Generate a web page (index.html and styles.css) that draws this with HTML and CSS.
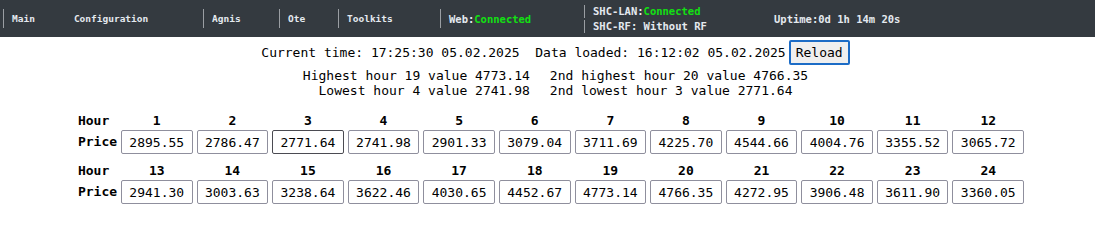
FILE: index.html
```html
<!DOCTYPE html>
<html lang="en">
<head>
	<meta charset="UTF-8">
	<title>Prices</title>
	<link rel="stylesheet" href="styles.css">
</head>
<body>

	<div class="topbar">
		<div class="nav-item nav-main"><a href="#">Main</a><a href="#" class="nav-sub">Configuration</a></div>
		<div class="nav-item nav-agnis"><a href="#">Agnis</a></div>
		<div class="nav-item nav-ote"><a href="#">Ote</a></div>
		<div class="nav-item nav-tools"><a href="#">Toolkits</a></div>
		<div class="nav-item nav-web state">Web:<span class="ok">Connected</span></div>
		<div class="nav-stack state">
			<div class="stack-line">SHC-LAN:<span class="ok">Connected</span></div>
			<div class="stack-line">SHC-RF: Without RF</div>
		</div>
		<div class="uptime state">Uptime:0d 1h 14m 20s</div>
	</div><!-- .topbar -->

	<div class="content">
		<div class="status">
			<span class="pre">Current time: 17:25:30 05.02.2025  Data loaded: 16:12:02 05.02.2025</span>
			<button class="btn">Reload</button>
		</div>

		<div class="extremes">
			<span class="left">Highest hour 19 value 4773.14</span>
			<span>2nd highest hour 20 value 4766.35</span>
			<span class="left">Lowest hour 4 value 2741.98</span>
			<span>2nd lowest hour 3 value 2771.64</span>
		</div>

		<div class="prices first">
			<b class="lbl">Hour</b>
			<b>1</b><b>2</b><b>3</b><b>4</b><b>5</b><b>6</b><b>7</b><b>8</b><b>9</b><b>10</b><b>11</b><b>12</b>
			<b class="lbl">Price</b>
			<input readonly value="2895.55">
			<input readonly value="2786.47">
			<input readonly value="2771.64" class="hover">
			<input readonly value="2741.98">
			<input readonly value="2901.33">
			<input readonly value="3079.04">
			<input readonly value="3711.69">
			<input readonly value="4225.70">
			<input readonly value="4544.66">
			<input readonly value="4004.76">
			<input readonly value="3355.52">
			<input readonly value="3065.72">
		</div>

		<div class="prices">
			<b class="lbl">Hour</b>
			<b>13</b><b>14</b><b>15</b><b>16</b><b>17</b><b>18</b><b>19</b><b>20</b><b>21</b><b>22</b><b>23</b><b>24</b>
			<b class="lbl">Price</b>
			<input readonly value="2941.30">
			<input readonly value="3003.63">
			<input readonly value="3238.64">
			<input readonly value="3622.46">
			<input readonly value="4030.65">
			<input readonly value="4452.67">
			<input readonly value="4773.14">
			<input readonly value="4766.35">
			<input readonly value="4272.95">
			<input readonly value="3906.48">
			<input readonly value="3611.90">
			<input readonly value="3360.05">
		</div>
	</div><!-- .content -->

</body>
</html>
```

FILE: styles.css
```css
body{ margin: 0; color: #000; background: #fff; font: 13px "DejaVu Sans Mono", "Liberation Mono", monospace;}

.topbar{ display: flex; align-items: center; padding-left: 3px; height: 37px; background: #343a40; color: #e4e9ef; font-size: 9.5px; font-weight: bold;}
.topbar a{ color: #e4e9ef; text-decoration: none;}
.topbar .state{ font-size: 10.5px;}
.nav-item{ display: flex; align-items: center; padding-left: 8px; height: 19px; border-left: 1px solid #9a9ea3; box-sizing: border-box;}
.nav-sub{ margin-left: 39px;}
.nav-main{ width: 200px;}
.nav-agnis{ width: 76px;}
.nav-ote{ width: 59px;}
.nav-tools{ width: 102px;}
.nav-web{ width: 144px;}
.ok{ color: #12e012;}
.nav-stack{ display: flex; flex-direction: column; gap: 2px; width: 190px;}
.stack-line{ padding-left: 8px; height: 13px; line-height: 13px; border-left: 1px solid #9a9ea3;}

.content{ padding-left: 16px;}
.status{ display: flex; justify-content: center; align-items: center; gap: 3px; margin-top: 3px;}
.pre{ white-space: pre;}
.btn{ padding: 0 5px; height: 25px; font: inherit; color: #000; background: #efefef; border: 2px solid #1c6cc6; border-radius: 2px;}

.extremes{ display: grid; grid-template-columns: auto auto; justify-content: center; column-gap: 20px; margin-top: 3px; line-height: 15px;}
.extremes .left{ text-align: right;}

.prices{ display: grid; grid-template-columns: 39px repeat(12, 71.6px); grid-template-rows: 16px 24px; justify-content: center; column-gap: 4px; row-gap: 1px; margin-top: 9px; padding-right: 9px; line-height: 16px;}
.prices.first{ margin-top: 15px;}
.prices b{ text-align: center;}
.prices .lbl{ text-align: left; align-self: center;}
.prices input{ box-sizing: border-box; width: 100%; height: 24px; padding: 0; font: inherit; text-align: center; color: #000; border: 1px solid #8f8f9d; border-radius: 2px; outline: none;}
.prices input.hover{ border-color: #4b4b52;}
```
